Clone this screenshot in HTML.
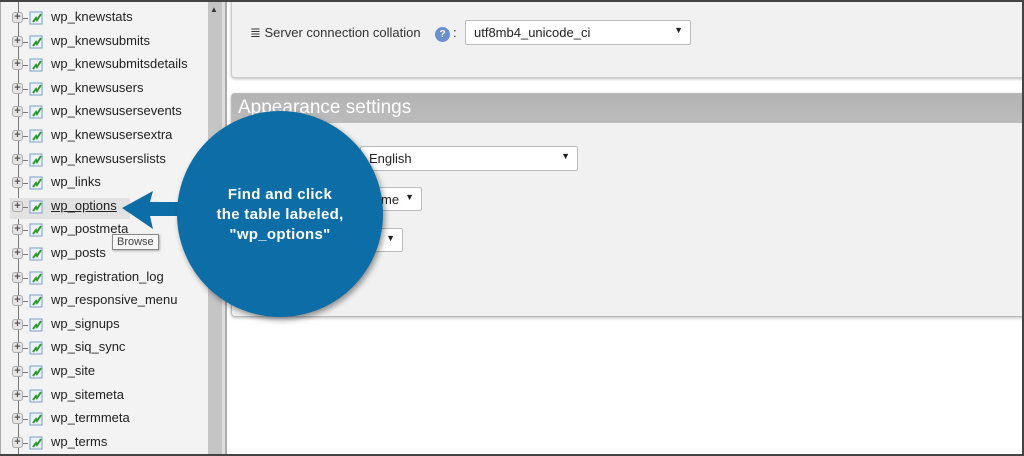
<!DOCTYPE html>
<html><head><meta charset="utf-8"><style>
*{margin:0;padding:0;box-sizing:border-box}
body{width:1024px;height:456px;overflow:hidden;background:#fff;font-family:"Liberation Sans",sans-serif;position:relative}
.side{position:absolute;left:0;top:0;width:208px;height:456px;background:#f3f3f3;border-left:1px solid #aaa}
.tl{position:absolute;left:18px;top:0;width:1px;height:456px;background:#777}
.row{position:absolute;left:10px;height:20px;width:198px;font-size:13px;color:#222}
.row .pl{position:absolute;left:2px;top:4px;width:11px;height:11px;border:1px solid #aaa;border-radius:3px;background:#e4e4e4;font-size:11px;line-height:9px;text-align:center;color:#555;font-weight:bold}
.row .dash{position:absolute;left:13px;top:10px;width:5px;height:1px;background:#777}
.row .ic{position:absolute;left:19px;top:3px;width:14px;height:14px}
.row .t{position:absolute;left:41px;top:1px}
.sb{position:absolute;left:208px;top:0;width:14px;height:456px;background:#c5c5c5}
.sb2{position:absolute;left:222px;top:0;width:3px;height:456px;background:#dedede}
.sb3{position:absolute;left:225px;top:0;width:2px;height:456px;background:#aaa}
.p1{position:absolute;left:231px;top:-4px;width:800px;height:82px;background:#f1f1f1;border:1px solid #ccc;border-radius:4px;box-shadow:0 1px 3px #bbb}
.p2{position:absolute;left:231px;top:93px;width:800px;height:224px;background:#f1f1f1;border:1px solid #bbb;border-radius:4px;box-shadow:0 1px 3px #bbb}
.hd{height:29px;background:linear-gradient(#b3b3b3,#bcbcbc);color:#fff;font-size:19px;padding:3px 6px}
.sel{position:absolute;background:#fff;border:1px solid #bbb;border-radius:2px;font-size:13px;color:#222;padding:4px 8px}
.sel b{position:absolute;right:7px;top:4px;font-size:9px}
.circ{position:absolute;left:177px;top:111px;width:206px;height:206px;border-radius:50%;background:#0d6ea7;box-shadow:2px 3px 6px rgba(0,0,0,.4)}
.ctext{position:absolute;left:177px;top:185px;width:206px;text-align:center;color:#fff;font-weight:bold;font-size:15px;line-height:20px;letter-spacing:.3px}
</style></head><body>
<div class="side"></div><div class="tl"></div>
<div style="position:absolute;left:10px;top:198px;width:120px;height:21px;background:#e2e2e2"></div>
<div id="rows"></div>
<div class="sb"></div><div class="sb2"></div><div class="sb3"></div>
<div style="position:absolute;left:210px;top:5px;font-size:8px;color:#333">▲</div>
<div class="p1">
 <div style="position:absolute;left:18px;top:28px;font-size:13px;color:#333">≣ Server connection collation</div>
 <div style="position:absolute;left:203px;top:30px;width:15px;height:15px;border-radius:50%;background:#6b8fcf;color:#fff;font-size:10px;text-align:center;line-height:15px;font-weight:bold">?</div>
 <div style="position:absolute;left:221px;top:28px;font-size:13px;color:#333">:</div>
 <div class="sel" style="left:233px;top:23px;width:226px;height:25px">utf8mb4_unicode_ci<b>▼</b></div>
</div>
<div class="p2"><div class="hd">Appearance settings</div>
 <div class="sel" style="left:128px;top:52px;width:218px;height:25px">English<b>▼</b></div>
 <div class="sel" style="left:140px;top:93px;width:50px;height:24px">me<b>▼</b></div>
 <div class="sel" style="left:140px;top:134px;width:31px;height:24px"><b>▼</b></div>
</div>
<div style="position:absolute;left:0;top:0;width:1024px;height:2px;background:#444"></div>
<div style="position:absolute;left:0;top:454px;width:1024px;height:2px;background:#444"></div>
<div style="position:absolute;left:1022px;top:0;width:2px;height:456px;background:#444"></div>
<div style="position:absolute;left:112px;top:234px;border:1px solid #888;background:#f6f6f6;font-size:11px;color:#444;padding:1px 4px;box-shadow:1px 1px 2px #aaa">Browse</div>
<svg style="position:absolute;left:0;top:0" width="400" height="456"><path d="M122 208 L153 191 L150 202 L200 202 L200 216 L150 216 L153 229 Z" fill="#0d6ea7"/></svg>
<div class="circ"></div>
<div class="ctext">Find and click<br>the table labeled,<br>"wp_options"</div>
<script>
var n=["wp_knewstats","wp_knewsubmits","wp_knewsubmitsdetails","wp_knewsusers","wp_knewsusersevents","wp_knewsusersextra","wp_knewsuserslists","wp_links","wp_options","wp_postmeta","wp_posts","wp_registration_log","wp_responsive_menu","wp_signups","wp_siq_sync","wp_site","wp_sitemeta","wp_termmeta","wp_terms"];
var h="";n.forEach(function(s,i){var y=8+i*23.6;h+='<div class="row" style="top:'+y+'px"><div class="pl">+</div><div class="dash"></div><svg class="ic" viewBox="0 0 14 14"><rect x="1" y="1" width="12" height="12" fill="#eef3fb" stroke="#7a9ccc"/><path d="M4 11 L7 7 L8 9 L12 3" stroke="#2a9a2a" stroke-width="2" fill="none"/></svg><span class="t"'+(s=="wp_options"?' style="text-decoration:underline"':'')+'>'+s+'</span></div>'});
document.getElementById("rows").innerHTML=h;
</script>
</body></html>
